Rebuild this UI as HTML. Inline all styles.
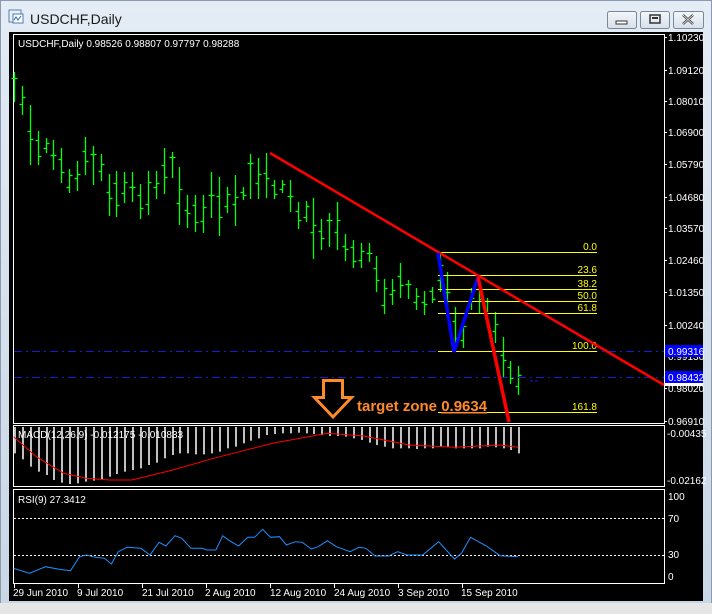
<!DOCTYPE html>
<html><head><meta charset="utf-8"><style>
html,body{margin:0;padding:0;width:712px;height:614px;overflow:hidden;background:#d4dde8;font-family:"Liberation Sans",sans-serif}
</style></head><body>
<svg width="712" height="614" xmlns="http://www.w3.org/2000/svg" style="position:absolute;left:0;top:0" font-family="Liberation Sans, sans-serif">
<defs><linearGradient id="tb" x1="0" y1="0" x2="0" y2="1"><stop offset="0" stop-color="#e4ecf5"/><stop offset="1" stop-color="#c8d6e6"/></linearGradient>
<linearGradient id="bt" x1="0" y1="0" x2="0" y2="1"><stop offset="0" stop-color="#f4f7fb"/><stop offset="1" stop-color="#d6dfea"/></linearGradient></defs>
<rect x="0" y="0" width="712" height="614" fill="url(#tb)"/>
<rect x="0.5" y="0.5" width="711" height="613" fill="none" stroke="#8a99ad"/>
<rect x="0" y="603" width="712" height="11" fill="#e6e6e6"/>
<rect x="9" y="10" width="12" height="12" fill="#e8f0fa" stroke="#5a7fb0"/><rect x="13" y="14" width="10" height="9" fill="#fff" stroke="#4a7ab8"/>
<polyline points="14,20 16,17 18,20 21,16" fill="none" stroke="#2c62b0"/>
<text x="30" y="24" font-size="14" fill="#1a1a1a">USDCHF,Daily</text>
<g stroke="#7a8898" fill="url(#bt)"><rect x="607.5" y="11.5" width="29" height="17" rx="2"/><rect x="640.5" y="11.5" width="29" height="17" rx="2"/><rect x="673.5" y="11.5" width="30" height="17" rx="2"/></g>
<rect x="616" y="21" width="11" height="3" fill="#fff" stroke="#333" stroke-width="1"/>
<rect x="650" y="15" width="10" height="8" fill="none" stroke="#333" stroke-width="1.5"/><rect x="652" y="17" width="6" height="2" fill="#333"/>
<path d="M683 15 L693 24 M693 15 L683 24" stroke="#444" stroke-width="2.5"/>
<path d="M683 15 L693 24 M693 15 L683 24" stroke="#eee" stroke-width="0.8"/>
<rect x="9" y="32" width="694" height="569" fill="#000"/>
<g fill="none" stroke="#fff" stroke-width="1">
<rect x="13.5" y="34.5" width="651" height="389"/>
<rect x="13.5" y="425.5" width="651" height="61"/>
<rect x="13.5" y="489.5" width="651" height="94"/>
</g>
<text x="18" y="47" font-size="10" fill="#fff">USDCHF,Daily  0.98526 0.98807 0.97797 0.98288</text>
<g font-size="10" fill="#fff" id="pax"></g>
<g id="bars" stroke="#00ff00" stroke-width="1.3"></g>
<g stroke="#1a1ad0" stroke-dasharray="8,4,2,4"><line x1="14" y1="351.5" x2="664" y2="351.5"/><line x1="14" y1="377.5" x2="664" y2="377.5"/></g>
<line x1="530" y1="381" x2="540" y2="381" stroke="#1a1ad0" stroke-dasharray="3,2"/>
<g stroke="#ffff00" stroke-width="1">
<line x1="438" y1="252.5" x2="597" y2="252.5"/><line x1="438" y1="275.5" x2="597" y2="275.5"/><line x1="438" y1="289.5" x2="597" y2="289.5"/><line x1="438" y1="301.5" x2="597" y2="301.5"/><line x1="438" y1="313.5" x2="597" y2="313.5"/><line x1="438" y1="351.5" x2="597" y2="351.5"/><line x1="438" y1="412.5" x2="597" y2="412.5"/></g>
<g fill="#ffff00" font-size="10" text-anchor="end">
<text x="597" y="250">0.0</text><text x="597" y="273">23.6</text><text x="597" y="287">38.2</text><text x="597" y="299">50.0</text><text x="597" y="311">61.8</text><text x="597" y="349">100.0</text><text x="597" y="410">161.8</text></g>
<line x1="270" y1="153" x2="664" y2="385" stroke="#ff0000" stroke-width="2.5"/>
<polyline points="438,253 454,352 478,277" fill="none" stroke="#0000ff" stroke-width="3.5"/>
<line x1="478" y1="277" x2="509" y2="422" stroke="#ff0000" stroke-width="3.5"/>
<rect x="665" y="345" width="38" height="12" fill="#0000ff"/><text x="668" y="355" font-size="10" fill="#fff">0.99316</text>
<rect x="665" y="371" width="38" height="12" fill="#0000ff"/><text x="668" y="381" font-size="10" fill="#fff">0.98432</text>
<rect x="665" y="383" width="38" height="3" fill="#fff"/>
<path d="M323.5 380.5 H342.5 V397.5 H351.5 L333 417 L314.5 397.5 H323.5 Z" fill="none" stroke="#ff8a2a" stroke-width="3"/>
<text x="357" y="411" font-size="15" font-weight="bold" fill="#ff8a2a">target zone <tspan text-decoration="underline">0.9634</tspan></text>
<g id="macd" stroke="#c0c0c0" stroke-width="2"></g>
<polyline id="sig" fill="none" stroke="#ff0000" stroke-width="1"/>
<text x="18" y="438" font-size="10" fill="#fff">MACD(12,26,9) -0.012175 -0.010833</text>
<text x="667" y="437" font-size="10" fill="#fff">-0.00435</text>
<text x="667" y="484" font-size="10" fill="#fff">-0.02162</text>
<g stroke="#fff" stroke-dasharray="2,2"><line x1="14" y1="518.5" x2="664" y2="518.5"/><line x1="14" y1="555.5" x2="664" y2="555.5"/></g>
<polyline id="rsi" fill="none" stroke="#1e90ff" stroke-width="1"/>
<text x="18" y="503" font-size="10" fill="#fff">RSI(9) 27.3412</text>
<g font-size="10" fill="#fff"><text x="668" y="500">100</text><text x="668" y="522">70</text><text x="668" y="558">30</text><text x="668" y="580">0</text></g>
<g font-size="10" fill="#fff"><text x="13" y="596">29 Jun 2010</text><text x="77" y="596">9 Jul 2010</text><text x="142" y="596">21 Jul 2010</text><text x="205" y="596">2 Aug 2010</text><text x="270" y="596">12 Aug 2010</text><text x="334" y="596">24 Aug 2010</text><text x="398" y="596">3 Sep 2010</text><text x="461" y="596">15 Sep 2010</text></g>
<g stroke="#fff" id="ticks"></g>
</svg>
<script>
var NS="http://www.w3.org/2000/svg";
function el(p,t,a){var e=document.createElementNS(NS,t);for(var k in a)e.setAttribute(k,a[k]);document.getElementById(p).appendChild(e);return e;}
var pl=[["1.10230",37],["1.09120",70],["1.08010",101],["1.06900",132],["1.05790",164],["1.04680",197],["1.03570",228],["1.02460",260],["1.01350",292],["1.00240",325],["0.99130",356],["0.98020",388],["0.96910",421]];
pl.forEach(function(p){var t=el("pax","text",{x:668,y:p[1]+4});t.textContent=p[0];el("pax","line",{x1:664,x2:667,y1:p[1]+.5,y2:p[1]+.5,stroke:"#fff"});});
var hl=[[72,102],[86,115],[105,165],[131,165],[138,153],[140,170],[148,183],[169,193],[161,191],[137,175],[146,185],[154,181],[174,216],[171,217],[172,203],[172,202],[184,219],[171,215],[171,199],[148,194],[152,178],[167,225],[195,228],[195,232],[195,233],[172,218],[177,236],[187,213],[175,226],[187,200],[154,199],[158,199],[153,198],[180,199],[180,193],[180,212],[202,229],[201,222],[198,259],[219,250],[213,247],[202,250],[234,261],[240,268],[243,268],[243,262],[256,292],[279,314],[279,305],[263,298],[280,299],[288,310],[291,315],[287,303],[253,292],[272,312],[307,352],[318,348],[288,310],[275,313],[298,312],[312,343],[337,378],[361,384],[366,395]];
var SP=7.88;
hl.forEach(function(b,i){var x=Math.round(14+i*SP)+.5;var h=b[1]-b[0];var o=b[0]+h*((i*37%10)/10*0.6+0.2),c=b[0]+h*((i*53%10)/10*0.6+0.2);
el("bars","line",{x1:x,x2:x,y1:b[0],y2:b[1]});el("bars","line",{x1:x-3,x2:x,y1:Math.round(o)+.5,y2:Math.round(o)+.5});el("bars","line",{x1:x,x2:x+3,y1:Math.round(c)+.5,y2:Math.round(c)+.5});});
var md=[100,118,140,155,165,180,188,192,190,185,182,178,170,162,155,150,145,135,128,115,105,100,100,103,103,100,95,85,80,70,62,55,45,42,40,40,38,40,42,45,48,48,50,55,60,68,75,80,85,85,85,87,85,85,80,82,85,85,85,85,80,82,85,90,100];
md.forEach(function(z,i){var x=Math.round(14+i*SP)+1;el("macd","line",{x1:x,x2:x,y1:427,y2:420+z/3});});
function cv(a){return a.map(function(p){return (p[0]/2.2).toFixed(1)+","+(420+p[1]/3).toFixed(1)}).join(" ");}
document.getElementById("sig").setAttribute("points",cv([[30,50],[80,110],[140,160],[190,175],[240,180],[290,180],[380,150],[470,115],[600,70],[720,40],[800,48],[900,75],[1000,82],[1100,75],[1140,82]]));
document.getElementById("rsi").setAttribute("points",cv([[30,445],[65,460],[100,440],[130,448],[155,452],[175,410],[190,405],[210,412],[230,415],[245,432],[260,395],[280,382],[310,385],[330,405],[350,367],[365,378],[385,347],[400,355],[420,385],[445,385],[455,390],[475,390],[490,347],[505,362],[525,378],[545,352],[560,352],[578,328],[595,352],[615,350],[630,375],[650,365],[665,367],[685,387],[700,380],[720,362],[740,380],[770,395],[790,382],[805,385],[825,408],[855,408],[875,395],[895,405],[930,405],[965,365],[1000,417],[1015,400],[1035,352],[1070,378],[1100,407],[1140,410]]));
[14,78,142,206,270,334,398,462].forEach(function(x){el("ticks","line",{x1:x+.5,x2:x+.5,y1:584,y2:588});});
</script>
</body></html>
